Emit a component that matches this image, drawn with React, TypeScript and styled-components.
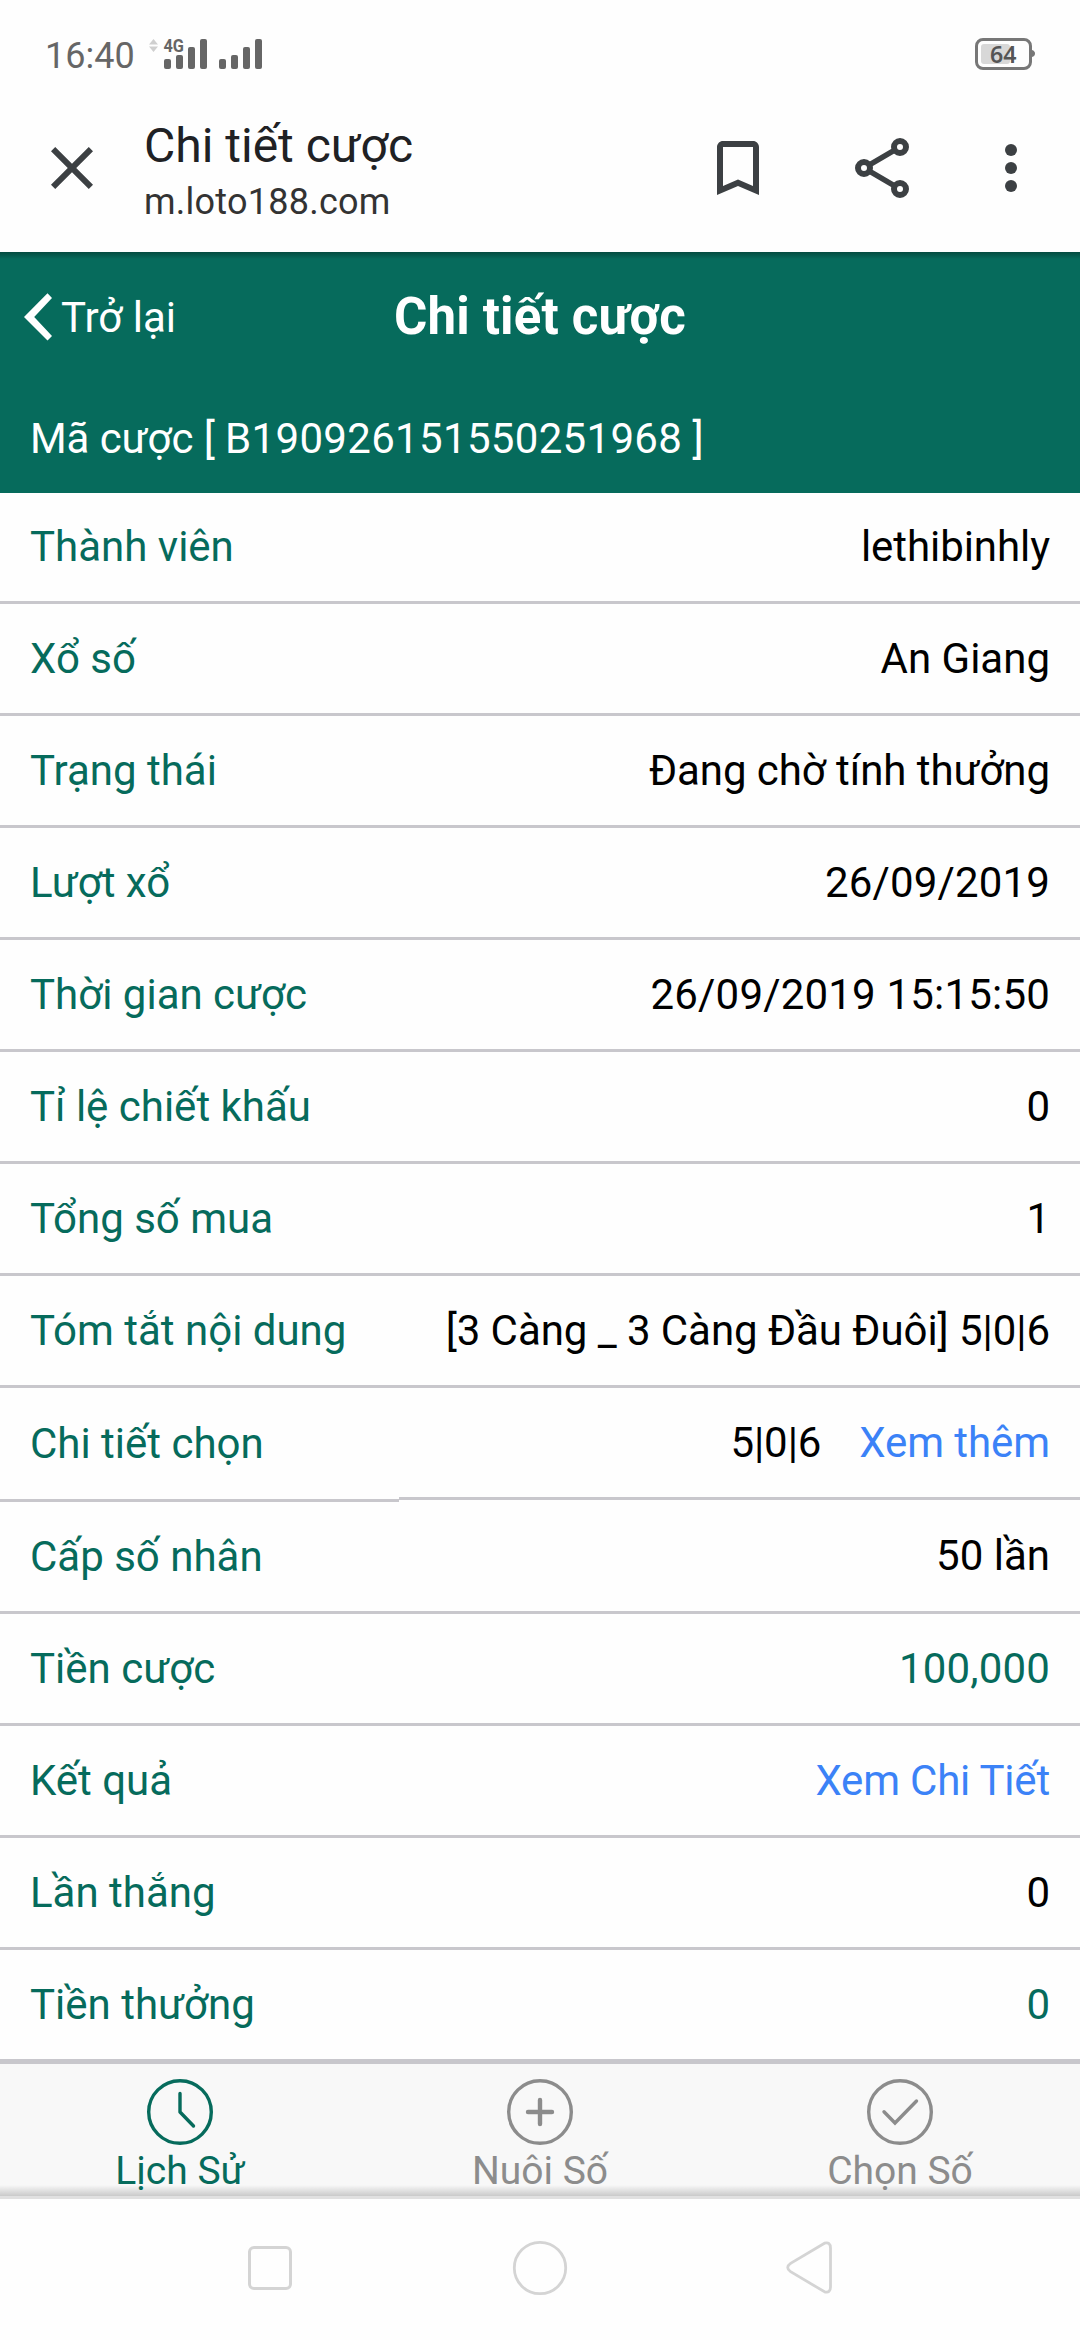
import React from "react";
import styled, { createGlobalStyle } from "styled-components";

const green = "#066b5c";
const blue = "#3b82f7";
const line = "#c8c7cc";

const GlobalStyle = createGlobalStyle`
  * { box-sizing: border-box; }
  body {
    margin: 0;
    background: #fff;
    font-family: Roboto, "Noto Sans", sans-serif;
    font-size: 42px;
    color: #000;
  }
`;

const Screen = styled.div`
  width: 1080px;
  height: 2340px;
  display: flex;
  flex-direction: column;
  background: #fefefe;
  overflow: hidden;
`;

/* ---------- status bar ---------- */

const StatusBar = styled.div`
  height: 84px;
  flex: none;
  display: flex;
  align-items: flex-start;
  padding: 0 45px;
  color: #666;
`;

const Clock = styled.span`
  width: 103px;
  margin-top: 34px;
  font-size: 36px;
  line-height: 44px;
  white-space: nowrap;
`;

const SignalIcon = styled.svg`
  margin-top: 36px;
  flex: none;
`;

const Battery = styled.svg`
  margin: 36px 0 0 auto;
  flex: none;
`;

/* ---------- browser bar ---------- */

const BrowserBar = styled.header`
  height: 168px;
  flex: none;
  display: flex;
  align-items: center;
  padding: 0 33px 0 36px;
  color: #3c4043;
`;

const Page = styled.div`
  flex: 1;
  padding: 13px 0 0 36px;
  display: flex;
  flex-direction: column;
`;

const PageTitle = styled.div`
  font-size: 48px;
  line-height: 56px;
  color: #202124;
`;

const PageUrl = styled.div`
  font-size: 36px;
  line-height: 57px;
  letter-spacing: 0.24px;
  color: #333;
`;

const Icon = styled.svg<{ $gap?: number }>`
  width: 72px;
  height: 72px;
  flex: none;
  margin-left: ${(p) => p.$gap ?? 0}px;
`;

/* ---------- app header ---------- */

const AppHeader = styled.div`
  height: 241px;
  flex: none;
  display: flex;
  flex-direction: column;
  color: #fff;
  background: linear-gradient(rgba(0, 0, 0, 0.3), rgba(0, 0, 0, 0) 7px), ${green};
`;

const TitleBar = styled.div`
  height: 130px;
  display: grid;
  grid-template-columns: 1fr auto 1fr;
  align-items: center;
`;

const Back = styled.a`
  display: flex;
  align-items: center;
  padding-left: 23px;
  gap: 8px;
`;

const Heading = styled.h1`
  margin: 0;
  font-size: 51px;
  line-height: 60px;
  font-weight: 700;
  letter-spacing: 0.15px;
`;

const BetCode = styled.div`
  padding-left: 30px;
  line-height: 60px;
  margin-top: 27px;
  letter-spacing: -0.08px;
`;

const Code = styled.span`
  letter-spacing: 0.32px;
`;

/* ---------- details ---------- */

const List = styled.div`
  flex: none;
  height: 1569px;
  display: flex;
  flex-direction: column;
`;

const Row = styled.div<{ $height: number }>`
  display: grid;
  grid-template-columns: 399px 1fr;
  grid-template-rows: 100%;
  align-items: end;
  flex: none;
  height: ${(p) => p.$height}px;
`;

const Cell = styled.div<{ $height: number; $drop?: number }>`
  height: ${(p) => p.$height}px;
  margin-bottom: ${(p) => -(p.$drop ?? 0)}px;
  border-bottom: 3px solid ${line};
  display: flex;
  align-items: center;
  white-space: nowrap;
`;

const Label = styled(Cell)`
  padding-left: 30px;
  color: ${green};
`;

const Value = styled(Cell)<{ $color?: string; $spacing?: number }>`
  padding-right: 30px;
  gap: 38px;
  justify-content: flex-end;
  color: ${(p) => p.$color ?? "#000"};
  letter-spacing: ${(p) => p.$spacing ?? 0}px;
`;

const Link = styled.a`
  color: ${blue};
`;

/* ---------- tab bar ---------- */

const TabBar = styled.nav`
  height: 137px;
  flex: none;
  display: grid;
  grid-template-columns: repeat(3, 1fr);
  border-top: 2px solid ${line};
  border-bottom: 3px solid #e0e0e0;
  background: linear-gradient(rgba(0, 0, 0, 0), rgba(0, 0, 0, 0.19)) bottom / 100% 11px no-repeat, #f8f8f8;
`;

const Tab = styled.a<{ $active?: boolean }>`
  display: flex;
  flex-direction: column;
  align-items: center;
  padding-top: 14px;
  font-size: 39px;
  line-height: 46px;
  color: ${(p) => (p.$active ? green : "#8c8c8c")};
`;

const TabIcon = styled.svg`
  width: 68px;
  height: 68px;
  margin-bottom: 2px;
`;

/* ---------- system navigation ---------- */

const SystemNav = styled.div`
  flex: 1;
  display: flex;
  justify-content: center;
  align-items: center;
  gap: 210px;
  padding-bottom: 3px;
`;

interface Detail {
  label: string;
  value: string;
  color?: string;
  link?: string;
  labelHeight?: number;
  valueHeight?: number;
  labelDrop?: number;
  height?: number;
  spacing?: number;
}

const details: Detail[] = [
  { label: "Thành viên", value: "lethibinhly", height: 111, spacing: -0.06 },
  { label: "Xổ số", value: "An Giang" },
  { label: "Trạng thái", value: "Đang chờ tính thưởng", spacing: -0.06 },
  { label: "Lượt xổ", value: "26/09/2019", spacing: 0.16 },
  { label: "Thời gian cược", value: "26/09/2019 15:15:50", spacing: 0.19 },
  { label: "Tỉ lệ chiết khấu", value: "0" },
  { label: "Tổng số mua", value: "1" },
  { label: "Tóm tắt nội dung", value: "[3 Càng _ 3 Càng Đầu Đuôi] 5|0|6", spacing: -0.06 },
  { label: "Chi tiết chọn", value: "5|0|6", link: "Xem thêm", labelHeight: 114, labelDrop: 2, spacing: -0.08 },
  { label: "Cấp số nhân", value: "50 lần", height: 114, valueHeight: 114 },
  { label: "Tiền cược", value: "100,000", color: green, spacing: 0.15 },
  { label: "Kết quả", value: "", link: "Xem Chi Tiết", spacing: -0.2 },
  { label: "Lần thắng", value: "0" },
  { label: "Tiền thưởng", value: "0", color: green },
];

const bars = [10, 14, 22, 30];

export default function App() {
  return (
    <>
      <GlobalStyle />
      <Screen>
        <StatusBar>
          <Clock>16:40</Clock>
          <SignalIcon width="116" height="36" viewBox="0 0 116 36" fill="#666">
            <path d="M1 8.5 L5.5 3 L10 8.5Z M1 10.5 L5.5 16 L10 10.5Z" fill="#cfcfcf" />
            <text x="15.5" y="16" fontSize="17.5" fontWeight="700" textLength="20.5" lengthAdjust="spacingAndGlyphs">
              4G
            </text>
            {bars.map((h, i) => (
              <React.Fragment key={h}>
                <rect x={16 + i * 12} y={33 - h} width="7" height={h} rx="2" />
                <rect x={71 + i * 12} y={33 - h} width="7" height={h} rx="2" />
              </React.Fragment>
            ))}
          </SignalIcon>
          <Battery width="60" height="36" viewBox="0 0 60 36">
            <rect x="1.5" y="3.5" width="54" height="29" rx="6.5" fill="none" stroke="#777" strokeWidth="3" />
            <path d="M57 14 q3 1 3 3.5 t-3 3.5z" fill="#777" />
            <rect x="6" y="8" width="29" height="20" rx="3" fill="#d8d8d8" />
            <text x="28.2" y="26.8" fontSize="24" fontWeight="600" fontFamily="Noto Sans" textAnchor="middle" textLength="26.5" lengthAdjust="spacingAndGlyphs" fill="#555">
              64
            </text>
          </Battery>
        </StatusBar>

        <BrowserBar>
          <Icon viewBox="0 0 24 24" fill="currentColor">
            <path d="M19 6.41L17.59 5 12 10.59 6.41 5 5 6.41 10.59 12 5 17.59 6.41 19 12 13.41 17.59 19 19 17.59 13.41 12z" />
          </Icon>
          <Page>
            <PageTitle>Chi tiết cược</PageTitle>
            <PageUrl>m.loto188.com</PageUrl>
          </Page>
          <Icon viewBox="0 0 24 24" fill="currentColor">
            <path d="M17 3H7c-1.1 0-2 .9-2 2v16l7-3 7 3V5c0-1.1-.9-2-2-2zm0 15l-5-2.18L7 18V5h10v13z" />
          </Icon>
          <Icon $gap={72} viewBox="0 0 24 24" fill="none" stroke="currentColor" strokeWidth="2">
            <circle cx="18" cy="5" r="2" />
            <circle cx="6" cy="12" r="2" />
            <circle cx="18" cy="19" r="2" />
            <path d="M7.8 10.95 L16.2 6.05 M7.8 13.05 L16.2 17.95" strokeWidth="1.8" />
          </Icon>
          <Icon $gap={57} viewBox="0 0 24 24" fill="currentColor">
            <circle cx="12" cy="6" r="2" />
            <circle cx="12" cy="12" r="2" />
            <circle cx="12" cy="18" r="2" />
          </Icon>
        </BrowserBar>

        <AppHeader>
          <TitleBar>
            <Back>
              <svg width="30" height="50" viewBox="0 0 30 50" fill="#fff">
                <path d="M24.5 1.2 L29 6 L11.2 25 L29 44 L24.5 48.5 L1 25Z" />
              </svg>
              Trở lại
            </Back>
            <Heading>Chi tiết cược</Heading>
          </TitleBar>
          <BetCode>
            Mã cược [ <Code>B190926151550251968</Code> ]
          </BetCode>
        </AppHeader>

        <List>
          {details.map((d) => (
            <Row key={d.label} $height={d.height ?? 112}>
              <Label $height={d.labelHeight ?? 112} $drop={d.labelDrop}>
                {d.label}
              </Label>
              <Value $height={d.valueHeight ?? 112} $color={d.color} $spacing={d.spacing}>
                {d.value && <span>{d.value}</span>}
                {d.link && <Link>{d.link}</Link>}
              </Value>
            </Row>
          ))}
        </List>

        <TabBar>
          <Tab $active>
            <TabIcon viewBox="0 0 68 68" fill="none" stroke="currentColor" strokeWidth="3.4" strokeLinecap="round">
              <circle cx="34" cy="34" r="31.3" />
              <path d="M34 15.5 V34 L47.5 48" strokeLinejoin="round" />
            </TabIcon>
            Lịch Sử
          </Tab>
          <Tab>
            <TabIcon viewBox="0 0 68 68" fill="none" stroke="currentColor" strokeWidth="3.4" strokeLinecap="round">
              <circle cx="34" cy="34" r="31.3" />
              <path d="M34 22 V46 M22 34 H46" strokeWidth="4.4" />
            </TabIcon>
            Nuôi Số
          </Tab>
          <Tab>
            <TabIcon viewBox="0 0 68 68" fill="none" stroke="currentColor" strokeWidth="3.4" strokeLinecap="round">
              <circle cx="34" cy="34" r="31.3" />
              <path d="M18 33.7 L29 45 L50.5 23" />
            </TabIcon>
            Chọn Số
          </Tab>
        </TabBar>

        <SystemNav>
          <svg width="60" height="60" viewBox="0 0 60 60" fill="none" stroke="#d4d4d4" strokeWidth="3">
            <rect x="9.5" y="9.5" width="41" height="41" rx="4.5" />
          </svg>
          <svg width="60" height="60" viewBox="0 0 60 60" fill="none" stroke="#d4d4d4" strokeWidth="2.8">
            <circle cx="30" cy="30" r="25.7" />
          </svg>
          <svg width="60" height="60" viewBox="0 0 60 60" fill="none" stroke="#d4d4d4" strokeWidth="2.8">
            <path d="M44.5 5.2 L10.6 25.4 Q4.8 29.5 10.6 33.6 L44.5 53.8 Q50.5 55.5 50.5 49 V10 Q50.5 3.5 44.5 5.2Z" />
          </svg>
        </SystemNav>
      </Screen>
    </>
  );
}
